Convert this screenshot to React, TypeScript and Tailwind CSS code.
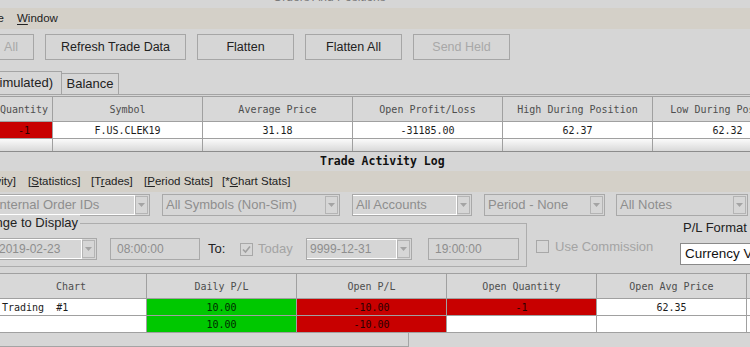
import React from "react";

const mono = "font-['DejaVu_Sans_Mono',monospace]";

function Arrow() {
  return (
    <div className="w-[13px] shrink-0 my-[1px] mr-[1px] border border-[#b4b4b4] flex justify-center pt-[6px]">
      <svg width="7" height="4" viewBox="0 0 7 4">
        <path d="M0 0 L7 0 L3.5 4 Z" fill="#a4a4a4" />
      </svg>
    </div>
  );
}

function Combo({
  text,
  cls,
  hi,
  size,
}: {
  text: string;
  cls: string;
  hi?: boolean;
  size?: string;
}) {
  return (
    <div className={"flex h-[22px] border border-[#a9a9a9] shrink-0 " + cls}>
      <div
        className={
          "flex-1 min-w-0 overflow-hidden whitespace-nowrap flex items-center pl-[3px] text-[#8e8e8e] " +
          (size ?? "text-[13px]") +
          (hi ? " border-t border-r border-b border-white" : "")
        }
      >
        {text}
      </div>
      <Arrow />
    </div>
  );
}

function Field({ text, cls }: { text: string; cls: string }) {
  return (
    <div
      className={
        "h-[22px] border border-[#a9a9a9] shrink-0 flex items-center pl-[6px] text-[12px] text-[#8e8e8e] " +
        cls
      }
    >
      {text}
    </div>
  );
}

function Check({ checked }: { checked?: boolean }) {
  return (
    <div className="w-[13px] h-[13px] border border-[#a8a8a8] shrink-0 flex items-center justify-center">
      {checked && (
        <svg width="11" height="11" viewBox="0 0 11 11">
          <path d="M2 5.5 L4.5 8 L9 2.5" stroke="#a0a0a0" strokeWidth="1.6" fill="none" />
        </svg>
      )}
    </div>
  );
}

type Cell = { t?: string; bg?: string; align?: string };

function Row({
  cells,
  widths,
  h,
  rowCls,
  txt,
}: {
  cells: Cell[];
  widths: string[];
  h: string;
  rowCls: string;
  txt: string;
}) {
  return (
    <div className={"flex -ml-[4px] w-[920px] " + h + " " + rowCls}>
      {cells.map((c, i) => (
        <div
          key={i}
          className={
            "shrink-0 border-r border-[#a0a0a0] flex items-center whitespace-nowrap overflow-hidden " +
            widths[i] +
            " " +
            (c.align ?? "justify-center") +
            " " +
            (c.bg ?? "") +
            " " +
            txt
          }
        >
          {c.t}
        </div>
      ))}
    </div>
  );
}

export default function App() {
  const w1 = ["w-[57px]", "w-[150px]", "w-[150px]", "w-[150px]", "w-[150px]", "w-[150px]"];
  const w2 = ["w-[151px]", "w-[150px]", "w-[150px]", "w-[150px]", "w-[150px]", "w-[150px]"];
  const red = "bg-[#c80000]";
  const green = "bg-[#00c800]";
  return (
    <div className="w-[750px] h-[347px] overflow-hidden bg-[#d6d6d6] font-['Liberation_Sans',sans-serif] text-[#222]">
      {/* title remnant */}
      <div className="h-[8px] overflow-hidden pl-[273px]">
        <div className="-mt-[10px] text-[12px] leading-[14px] text-[#7a7a7a] whitespace-nowrap">
          Orders And Positions
        </div>
      </div>
      {/* menu bar */}
      <div className="h-[21px] bg-[#d4d0c8] flex items-center text-[11.5px] text-[#222]">
        <div className="w-[4px] flex justify-end">
          <span className="shrink-0 whitespace-nowrap">Trade</span>
        </div>
        <span className="ml-[13px]">
          <span className="underline underline-offset-2">W</span>indow
        </span>
      </div>
      {/* buttons */}
      <div className="mt-[5px] h-[26px] flex gap-[11px] text-[12.5px]">
        <div className="-ml-[12px] w-[46px] shrink-0 border border-[#a6a6a6] flex items-center justify-center text-[#a8a8a8]">
          All
        </div>
        <div className="w-[141px] shrink-0 border border-[#a6a6a6] flex items-center justify-center">
          Refresh Trade Data
        </div>
        <div className="w-[97px] shrink-0 border border-[#a6a6a6] flex items-center justify-center">
          Flatten
        </div>
        <div className="w-[97px] shrink-0 border border-[#a6a6a6] flex items-center justify-center">
          Flatten All
        </div>
        <div className="w-[97px] shrink-0 border border-[#a6a6a6] flex items-center justify-center text-[#a8a8a8]">
          Send Held
        </div>
      </div>
      {/* tabs */}
      <div className="mt-[11px] h-[24px] flex items-end border-b border-[#a4a4a4] text-[13px]">
        <div className="w-[62px] flex justify-end">
          <div className="shrink-0 h-[23px] border border-b-0 border-[#a4a4a4] pl-[7px] pr-[8px] flex items-center whitespace-nowrap">
            Positions (Non-simulated)
          </div>
        </div>
        <div className="w-[57px] h-[21px] border border-l-0 border-b-0 border-[#a4a4a4] flex items-center justify-center">
          Balance
        </div>
      </div>
      <div className="h-[1px]" />
      {/* top table */}
      <Row
        widths={w1}
        h="h-[26px]"
        rowCls="border-t border-b border-[#a0a0a0] bg-[#d8d8d8]"
        txt={mono + " text-[10px] text-[#4e4e4e]"}
        cells={[
          { t: "Quantity" },
          { t: "Symbol" },
          { t: "Average Price" },
          { t: "Open Profit/Loss" },
          { t: "High During Position" },
          { t: "Low During Position" },
        ]}
      />
      <Row
        widths={w1}
        h="h-[17px]"
        rowCls="border-b border-[#a0a0a0] bg-white"
        txt={mono + " text-[10px] text-[#1c1c1c]"}
        cells={[
          { t: "-1", bg: red + " text-[#2a0000]" },
          { t: "F.US.CLEK19" },
          { t: "31.18" },
          { t: "-31185.00" },
          { t: "62.37" },
          { t: "62.32" },
        ]}
      />
      <Row
        widths={w1}
        h="h-[13px]"
        rowCls="border-b border-[#8c8c8c] bg-linear-to-b from-[#fbfbfb] to-[#d9d9d9]"
        txt={mono + " text-[10px]"}
        cells={[{}, {}, {}, {}, {}, {}]}
      />
      {/* Trade Activity Log */}
      <div className={"h-[19px] flex items-center pl-[320px] font-bold text-[11.5px] text-[#111] " + mono}>
        Trade Activity Log
      </div>
      {/* tab strip */}
      <div className="h-[21px] bg-[#d4d0c8] flex items-center text-[11.5px] text-[#222] whitespace-nowrap">
        <div className="w-[16px] flex justify-end">
          <span className="shrink-0">
            [<span className="underline">A</span>ctivity]
          </span>
        </div>
        <span className="ml-[12px] w-[51px] shrink-0">
          [<span className="underline">S</span>tatistics]
        </span>
        <span className="ml-[12px] w-[41px] shrink-0">
          [T<span className="underline">r</span>ades]
        </span>
        <span className="ml-[12px] w-[66px] shrink-0">
          [<span className="underline">P</span>eriod Stats]
        </span>
        <span className="ml-[12px] w-[69px] shrink-0">
          [*<span className="underline">C</span>hart Stats]
        </span>
      </div>
      {/* dropdowns */}
      <div className="mt-[2px] flex">
        <Combo text="Internal Order IDs" cls="-ml-[8px] w-[158px]" hi />
        <Combo text="All Symbols (Non-Sim)" cls="ml-[12px] w-[178px]" />
        <Combo text="All Accounts" cls="ml-[12px] w-[120px]" hi />
        <Combo text="Period - None" cls="ml-[12px] w-[121px]" />
        <Combo text="All Notes" cls="ml-[11px] w-[132px]" />
      </div>
      {/* middle */}
      <div className="h-[51px] flex items-start">
        <div className="-ml-[40px] w-[567px] shrink-0 mt-[7px] h-[44px] relative border border-[#adadad]">
          <div className="absolute right-[446px] -top-[9px] bg-[#d6d6d6] pl-[2px] pr-[2px] text-[13px] leading-[15px] text-[#222] whitespace-nowrap">
            Range to Display
          </div>
          <div className="flex items-center pt-[14px]">
            <Combo text="2019-02-23" cls="ml-[34px] w-[102px]" hi size="text-[12px]" />
            <Field text="08:00:00" cls="ml-[13px] w-[90px]" />
            <span className="ml-[8px] w-[17px] shrink-0 text-[13px] text-[#222]">To:</span>
            <div className="ml-[15px]">
              <Check checked />
            </div>
            <span className="ml-[5px] w-[34px] shrink-0 text-[13px] text-[#a4a4a4]">Today</span>
            <Combo text="9999-12-31" cls="ml-[14px] w-[106px]" hi size="text-[12px]" />
            <Field text="19:00:00" cls="ml-[16px] w-[91px]" />
          </div>
        </div>
        <div className="ml-[9px] w-[144px] shrink-0 mt-[21px] flex items-center">
          <Check />
          <span className="ml-[6px] text-[13px] text-[#a4a4a4] whitespace-nowrap">Use Commission</span>
        </div>
        <div className="flex flex-col shrink-0">
          <div className="pl-[3px] mt-[4px] text-[13px] leading-[15px] text-[#222] whitespace-nowrap">P/L Format</div>
          <div className="mt-[8px] h-[22px] w-[90px] bg-white border border-[#8a8a8a] flex items-center pl-[4px] text-[13.5px] text-[#111] whitespace-nowrap">
            Currency Value
          </div>
        </div>
      </div>
      <div className="h-[6px]" />
      {/* bottom table */}
      <Row
        widths={w2}
        h="h-[26px]"
        rowCls="border-t border-b border-[#a0a0a0] bg-[#d8d8d8]"
        txt={mono + " text-[10px] text-[#4e4e4e]"}
        cells={[
          { t: "Chart" },
          { t: "Daily P/L" },
          { t: "Open P/L" },
          { t: "Open Quantity" },
          { t: "Open Avg Price" },
          { t: "" },
        ]}
      />
      <Row
        widths={w2}
        h="h-[17px]"
        rowCls="border-b border-[#a0a0a0] bg-white"
        txt={mono + " text-[10px] text-[#1c1c1c]"}
        cells={[
          { t: "Trading  #1", align: "justify-start pl-[6px] whitespace-pre" },
          { t: "10.00", bg: green + " text-[#002a00]" },
          { t: "-10.00", bg: red + " text-[#2a0000]" },
          { t: "-1", bg: red + " text-[#2a0000]" },
          { t: "62.35" },
          { t: "" },
        ]}
      />
      <Row
        widths={w2}
        h="h-[17px]"
        rowCls="border-b border-[#a0a0a0] bg-white"
        txt={mono + " text-[10px] text-[#1c1c1c]"}
        cells={[
          { t: "" },
          { t: "10.00", bg: green + " text-[#002a00]" },
          { t: "-10.00", bg: red + " text-[#2a0000]" },
          { t: "" },
          { t: "" },
          { t: "" },
        ]}
      />
      {/* scrollbar */}
      <div className="h-[15px] flex">
        <div className="-ml-[10px] w-[419px] shrink-0 h-[14px] border-r border-b border-[#a4a4a4] bg-[#d6d6d6]" />
      </div>
    </div>
  );
}
